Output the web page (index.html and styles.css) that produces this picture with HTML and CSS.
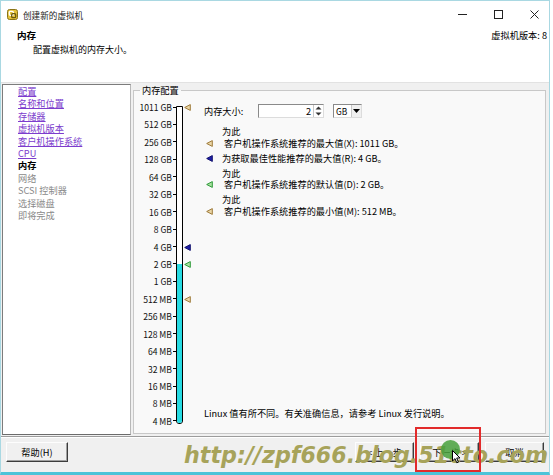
FILE: index.html
```html
<!DOCTYPE html>
<html lang="zh-CN">
<head>
<meta charset="utf-8">
<title>创建新的虚拟机</title>
<link rel="stylesheet" href="styles.css">
</head>
<body>
<div class="window">
  <div class="titlebar">
    <svg class="app-icon" width="11" height="11" viewBox="0 0 11 11">
      <rect x="0.5" y="0.5" width="10" height="10" rx="2" fill="#e3c23a" stroke="#8a7418"/>
      <rect x="2.3" y="2.3" width="4" height="4" rx="1" fill="none" stroke="#fff" stroke-width="1.3"/>
      <rect x="4.7" y="4.7" width="4" height="4" rx="1" fill="none" stroke="#6b5a10" stroke-width="1.3"/>
    </svg>
    <span class="title">创建新的虚拟机</span>
    <div class="win-controls">
      <svg class="ctl" width="9" height="9" viewBox="0 0 9 9"><path d="M0 4.5H9" stroke="#222"/></svg>
      <svg class="ctl" width="9" height="9" viewBox="0 0 9 9"><rect x="0.5" y="0.5" width="8" height="8" fill="none" stroke="#222"/></svg>
      <svg class="ctl" width="9" height="9" viewBox="0 0 9 9"><path d="M0.5 0.5L8.5 8.5M8.5 0.5L0.5 8.5" stroke="#222"/></svg>
    </div>
  </div>

  <div class="header">
    <div class="header-text">
      <div class="h-title">内存</div>
      <div class="h-desc">配置虚拟机的内存大小。</div>
    </div>
    <div class="version">虚拟机版本: 8</div>
  </div>

  <div class="main">
    <nav class="steps">
      <a class="step link">配置</a>
      <a class="step link">名称和位置</a>
      <a class="step link">存储器</a>
      <a class="step link">虚拟机版本</a>
      <a class="step link">客户机操作系统</a>
      <a class="step link">CPU</a>
      <span class="step current">内存</span>
      <span class="step pending">网络</span>
      <span class="step pending">SCSI 控制器</span>
      <span class="step pending">选择磁盘</span>
      <span class="step pending">即将完成</span>
    </nav>

    <fieldset class="mem">
      <legend>内存配置</legend>
      <div class="mem-body">
        <div class="scale">
          <div class="labels">
            <div class="tick-row"><span>1011 GB</span><i class="tick"></i></div>
            <div class="tick-row"><span>512 GB</span><i class="tick"></i></div>
            <div class="tick-row"><span>256 GB</span><i class="tick"></i></div>
            <div class="tick-row"><span>128 GB</span><i class="tick"></i></div>
            <div class="tick-row"><span>64 GB</span><i class="tick"></i></div>
            <div class="tick-row"><span>32 GB</span><i class="tick"></i></div>
            <div class="tick-row"><span>16 GB</span><i class="tick"></i></div>
            <div class="tick-row"><span>8 GB</span><i class="tick"></i></div>
            <div class="tick-row"><span>4 GB</span><i class="tick"></i></div>
            <div class="tick-row"><span>2 GB</span><i class="tick"></i></div>
            <div class="tick-row"><span>1 GB</span><i class="tick"></i></div>
            <div class="tick-row"><span>512 MB</span><i class="tick"></i></div>
            <div class="tick-row"><span>256 MB</span><i class="tick"></i></div>
            <div class="tick-row"><span>128 MB</span><i class="tick"></i></div>
            <div class="tick-row"><span>64 MB</span><i class="tick"></i></div>
            <div class="tick-row"><span>32 MB</span><i class="tick"></i></div>
            <div class="tick-row"><span>16 MB</span><i class="tick"></i></div>
            <div class="tick-row"><span>8 MB</span><i class="tick"></i></div>
            <div class="tick-row"><span>4 MB</span><i class="tick"></i></div>
          </div>
          <div class="bar">
            <div class="fill" style="height:159px"></div>
            <svg class="marker" style="top:-2.5px" width="7" height="7" viewBox="0 0 7 7"><polygon points="0.7,3.5 6.3,0.6 6.3,6.4" class="m-tan"/></svg>
            <svg class="marker" style="top:137px" width="7" height="7" viewBox="0 0 7 7"><polygon points="0.7,3.5 6.3,0.6 6.3,6.4" class="m-blue"/></svg>
            <svg class="marker" style="top:154.5px" width="7" height="7" viewBox="0 0 7 7"><polygon points="0.7,3.5 6.3,0.6 6.3,6.4" class="m-green"/></svg>
            <svg class="marker" style="top:189.5px" width="7" height="7" viewBox="0 0 7 7"><polygon points="0.7,3.5 6.3,0.6 6.3,6.4" class="m-tan"/></svg>
          </div>
        </div>

        <div class="config">
          <div class="size-row">
            <span class="size-label">内存大小:</span>
            <div class="spin">
              <span class="spin-value">2</span>
              <span class="spin-btns">
                <svg width="7" height="4" viewBox="0 0 7 4"><polygon points="3.5,0.5 6.5,3.5 0.5,3.5" fill="#333"/></svg>
                <svg width="7" height="4" viewBox="0 0 7 4"><polygon points="0.5,0.5 6.5,0.5 3.5,3.5" fill="#333"/></svg>
              </span>
            </div>
            <div class="unit">
              <span class="unit-value">GB</span>
              <span class="unit-btn"><svg width="7" height="4" viewBox="0 0 7 4"><polygon points="0,0 7,0 3.5,4" fill="#000"/></svg></span>
            </div>
          </div>

          <div class="legend-list">
            <div class="rec">
              <svg class="rec-marker" width="7" height="7" viewBox="0 0 7 7"><polygon points="0.7,3.5 6.3,0.6 6.3,6.4" class="m-tan"/></svg>
              <span class="line">为此</span>
              <span class="line indent">客户机操作系统推荐的最大值(X): 1011 GB。</span>
            </div>
            <div class="rec single">
              <svg class="rec-marker" width="7" height="7" viewBox="0 0 7 7"><polygon points="0.7,3.5 6.3,0.6 6.3,6.4" class="m-blue"/></svg>
              <span class="line">为获取最佳性能推荐的最大值(R): 4 GB。</span>
            </div>
            <div class="rec">
              <svg class="rec-marker" width="7" height="7" viewBox="0 0 7 7"><polygon points="0.7,3.5 6.3,0.6 6.3,6.4" class="m-green"/></svg>
              <span class="line">为此</span>
              <span class="line indent">客户机操作系统推荐的默认值(D): 2 GB。</span>
            </div>
            <div class="rec">
              <svg class="rec-marker" width="7" height="7" viewBox="0 0 7 7"><polygon points="0.7,3.5 6.3,0.6 6.3,6.4" class="m-tan"/></svg>
              <span class="line">为此</span>
              <span class="line indent">客户机操作系统推荐的最小值(M): 512 MB。</span>
            </div>
          </div>

          <div class="note">Linux 值有所不同。有关准确信息，请参考 Linux 发行说明。</div>
        </div>
      </div>
    </fieldset>
  </div>

  <div class="footer">
    <button class="btn">帮助(H)</button>
    <div class="btn-group">
      <button class="btn">&lt; 上一步</button>
      <button class="btn">下一步 &gt;</button>
      <button class="btn">取消</button>
    </div>
  </div>

  <div class="watermark">http://zpf666.blog.51cto.com</div>
  <div class="highlight"></div>
  <div class="click-dot"></div>
  <svg class="cursor" width="9" height="14" viewBox="0 0 9 14"><path d="M0.5 0.5V11L3 8.6L4.8 12.8L6.4 12.1L4.7 8H8Z" fill="#fff" stroke="#000"/></svg>
</div>
</body>
</html>
```

FILE: styles.css
```css
html, body {
  margin: 0;
  padding: 0;
  background: #fff;
}

body {
  font-family: "Noto Sans CJK SC", "Liberation Sans", sans-serif;
  font-size: 9.2px;
  color: #000;
  width: 553px;
  height: 475px;
  overflow: hidden;
}

.window {
  position: relative;
  width: 550px;
  height: 475px;
  box-sizing: border-box;
  border: 1px solid #a9d8e2;
  border-bottom: 3px solid #4cc3d8;
  display: flex;
  flex-direction: column;
  background: #fff;
}

/* title bar */
.titlebar {
  height: 27px;
  display: flex;
  align-items: center;
  padding-left: 6px;
  flex: none;
}

.app-icon {
  display: block;
  margin-right: 5px;
}

.title {
  font-size: 8.6px;
  color: #222;
}

.win-controls {
  margin-left: auto;
  display: flex;
  align-items: center;
  gap: 27px;
  padding-right: 10px;
}

.ctl {
  display: block;
}

/* header */
.header {
  height: 54px;
  flex: none;
  display: flex;
  justify-content: space-between;
  align-items: flex-start;
  padding: 1px 2px 0 16px;
  box-sizing: border-box;
  line-height: 12px;
}

.h-title {
  font-weight: bold;
  font-size: 9.6px;
}

.h-desc {
  margin-top: 3px;
  padding-left: 16px;
  font-size: 9px;
}

.version {
  font-size: 9.2px;
}

/* main */
.main {
  height: 354px;
  flex: none;
  display: flex;
  background: #f0f0f0;
  padding: 1px 3px 1px 1px;
  box-sizing: border-box;
  border-top: 1px solid #e2e2e2;
}

.steps {
  width: 129px;
  box-sizing: border-box;
  background: #fff;
  border: 1px solid #7c7c7c;
  border-right-color: #b8b8b8;
  border-bottom-color: #6c6c6c;
  padding: 0 0 0 15px;
  display: flex;
  flex-direction: column;
  align-items: flex-start;
  line-height: 12.4px;
}

.step {
  white-space: nowrap;
}

.link {
  color: #7c3ccd;
  text-decoration: underline;
}

.current {
  font-weight: bold;
  color: #000;
}

.pending {
  color: #8a8a8a;
}

.mem {
  flex: 1;
  min-width: 0;
  margin: 0 0 1px 2px;
  padding: 0;
  border: 1px solid #c8c8c8;
  background: #f9f9f9;
}

.mem legend {
  margin-left: 6px;
  padding: 0 2px;
  line-height: 12px;
  font-size: 9.2px;
}

.mem-body {
  display: flex;
  height: 336px;
}

/* scale */
.scale {
  width: 70px;
  flex: none;
  display: flex;
  align-items: flex-start;
  padding-top: 2.3px;
  box-sizing: border-box;
}

.labels {
  width: 42px;
  display: flex;
  flex-direction: column;
}

.tick-row {
  height: 17.44px;
  display: flex;
  align-items: center;
  justify-content: flex-end;
  white-space: nowrap;
  font-size: 8.6px;
  color: #111;
}

.tick {
  display: block;
  width: 3px;
  height: 1px;
  background: #000;
  margin-left: 1px;
}

.bar {
  position: relative;
  width: 7px;
  height: 318px;
  margin-top: 7.7px;
  box-sizing: border-box;
  border: 1px solid #000;
  border-radius: 0 0 3px 3px;
  background: #fff;
  display: flex;
  flex-direction: column;
  justify-content: flex-end;
}

.fill {
  background: #27dbe3;
  border-radius: 0 0 2px 2px;
}

.marker {
  position: absolute;
  left: 7px;
  display: block;
}

.m-tan {
  fill: #ead7a8;
  stroke: #9e7a3a;
  stroke-width: 1;
}

.m-blue {
  fill: #1f1fa6;
  stroke: #14146e;
  stroke-width: 1;
}

.m-green {
  fill: #a9e0a0;
  stroke: #2e9a3a;
  stroke-width: 1;
}

/* config column */
.config {
  flex: 1;
  display: flex;
  flex-direction: column;
  padding: 8px 0 13px 0;
  box-sizing: border-box;
}

.size-row {
  display: flex;
  align-items: center;
  height: 13px;
}

.size-label {
  width: 54px;
}

.spin {
  width: 66px;
  height: 14px;
  box-sizing: border-box;
  border: 1px solid #8a8a8a;
  border-color: #8a8a8a #dcdcdc #dcdcdc #8a8a8a;
  background: #fff;
  display: flex;
  align-items: center;
}

.spin-value {
  flex: 1;
  text-align: right;
  padding-right: 2px;
  line-height: 12px;
}

.spin-btns {
  width: 10px;
  height: 12px;
  display: flex;
  flex-direction: column;
  justify-content: space-around;
  align-items: center;
  border-left: 1px solid #c8c8c8;
  box-sizing: border-box;
}

.spin-btns svg {
  display: block;
}

.unit {
  margin-left: 9px;
  width: 29px;
  height: 14px;
  box-sizing: border-box;
  border: 1px solid #8a8a8a;
  border-color: #8a8a8a #dcdcdc #dcdcdc #8a8a8a;
  background: #fff;
  display: flex;
  align-items: center;
}

.unit-value {
  flex: 1;
  padding-left: 2px;
  font-size: 8.4px;
  line-height: 12px;
}

.unit-btn {
  width: 10px;
  height: 12px;
  display: flex;
  align-items: center;
  justify-content: center;
  background: #f0f0f0;
  border-left: 1px solid #c8c8c8;
  box-sizing: border-box;
}

.unit-btn svg {
  display: block;
}

.legend-list {
  margin-top: 9.3px;
  display: flex;
  flex-direction: column;
  gap: 3.5px;
}

.rec {
  display: grid;
  grid-template-columns: 18px auto;
  line-height: 11.5px;
  white-space: nowrap;
}

.rec .line {
  grid-column: 2;
}

.rec .indent {
  padding-left: 2px;
}

.rec-marker {
  grid-column: 1;
  grid-row: 2;
  align-self: center;
  margin: 0 0 1px 2px;
  display: block;
}

.rec.single .rec-marker {
  grid-row: 1;
  margin-bottom: 0;
}

.note {
  margin-top: auto;
  line-height: 12px;
  white-space: nowrap;
}

/* footer */
.footer {
  flex: 1;
  display: flex;
  align-items: flex-start;
  justify-content: space-between;
  padding: 5px 5px 0 5px;
  background: #f0f0f0;
  border-top: 1px solid #9c9c9c;
  box-shadow: inset 0 1px 0 #fff;
  box-sizing: border-box;
}

.btn-group {
  display: flex;
  gap: 6px;
}

.btn {
  width: 59px;
  height: 20px;
  margin: 0;
  padding: 0;
  box-sizing: border-box;
  font-family: inherit;
  font-size: 9.2px;
  color: #000;
  background: #f0f0f0;
  border: 1px solid;
  border-color: #fdfdfd #3c3c3c #3c3c3c #fdfdfd;
  box-shadow: inset -1px -1px 0 #a0a0a0;
}

.footer > .btn {
  width: 62px;
}

/* overlays */
.watermark {
  position: absolute;
  left: 183px;
  top: 443px;
  font-family: "DejaVu Sans", sans-serif;
  font-weight: bold;
  font-style: italic;
  font-size: 22.2px;
  line-height: 22px;
  color: #a7a35a;
  white-space: nowrap;
  pointer-events: none;
}

.highlight {
  position: absolute;
  left: 414px;
  top: 426px;
  width: 66px;
  height: 45px;
  box-sizing: border-box;
  border: 2px solid #e22b2b;
}

.click-dot {
  position: absolute;
  left: 440px;
  top: 439px;
  width: 19px;
  height: 19px;
  border-radius: 50%;
  background: rgba(70, 160, 60, 0.85);
}

.cursor {
  position: absolute;
  left: 451px;
  top: 449px;
  display: block;
}
```
